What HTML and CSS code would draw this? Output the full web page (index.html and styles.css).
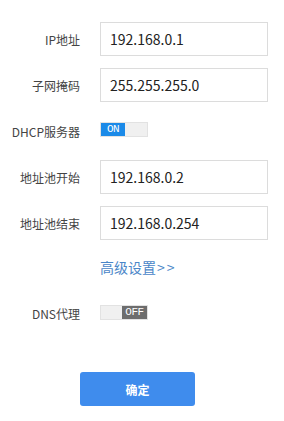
FILE: index.html
```html
<!DOCTYPE html>
<html lang="zh">
<head>
<meta charset="utf-8">
<link rel="stylesheet" href="styles.css">
</head>
<body>
<form class="form">
  <div class="row">
    <label class="label">IP地址</label>
    <div class="field"><input class="input" value="192.168.0.1"></div>
  </div>
  <div class="row">
    <label class="label">子网掩码</label>
    <div class="field"><input class="input" value="255.255.255.0"></div>
  </div>
  <div class="row">
    <label class="label">DHCP服务器</label>
    <div class="field"><span class="toggle toggle-on"><span class="knob-text">ON</span><span class="rest"></span></span></div>
  </div>
  <div class="row">
    <label class="label">地址池开始</label>
    <div class="field"><input class="input" value="192.168.0.2"></div>
  </div>
  <div class="row">
    <label class="label">地址池结束</label>
    <div class="field"><input class="input" value="192.168.0.254"></div>
  </div>
  <div class="row row-link">
    <span class="label"></span>
    <div class="field"><a class="link">高级设置<span class="arrows">&gt;&gt;</span></a></div>
  </div>
  <div class="row row-dns">
    <label class="label">DNS代理</label>
    <div class="field"><span class="toggle toggle-off"><span class="rest"></span><span class="knob-text">OFF</span></span></div>
  </div>
  <div class="actions">
    <button type="button" class="btn">确定</button>
  </div>
</form>
</body>
</html>
```
FILE: styles.css
```css
* { box-sizing: border-box; }
html, body { margin: 0; padding: 0; background: #fff; }
body {
  font-family: "Noto Sans CJK SC", "Noto Sans", sans-serif;
  color: #333;
}
.form {
  display: flex;
  flex-direction: column;
  padding-top: 22px;
  width: 284px;
}
.row {
  display: flex;
  align-items: center;
  height: 34px;
  margin-bottom: 12px;
}
.label {
  width: 80px;
  text-align: right;
  font-size: 12px;
  color: #444;
  margin-right: 20px;
  flex: none;
}
.field { flex: none; width: 168px; display: flex; align-items: center; }
.input {
  width: 168px;
  height: 34px;
  border: 1px solid #dcdcdc;
  padding: 0 9px;
  font-family: "Noto Sans CJK SC", "Noto Sans", sans-serif;
  font-size: 14px;
  color: #222;
  outline: none;
  background: #fff;
}
.toggle {
  display: flex;
  width: 48px;
  height: 15px;
  margin-top: -4px;
  border: 1px solid #e2e2e2;
}
.toggle .rest {
  flex: 1;
  background: #f0f0f0;
}
.knob-text {
  width: 24px;
  display: flex;
  align-items: center;
  justify-content: center;
  font-family: "Liberation Mono", "DejaVu Sans Mono", monospace;
  font-size: 11px;
  color: #fff;
  line-height: 1;
  letter-spacing: -0.5px;
}
.toggle-on .knob-text { background: #1b8ae8; }
.toggle-off .knob-text { background: #6d6d6d; width: 25px; }
.row-link { height: 30px; }
.link {
  font-size: 14px;
  color: #4a86c8;
}
.arrows { letter-spacing: 2px; margin-left: 1px; }
.row-dns { margin-top: 2px; }
.row-dns .toggle { margin-top: -2px; }
.actions {
  padding-left: 80px;
  margin-top: 30px;
}
.btn {
  width: 115px;
  height: 34px;
  border: none;
  border-radius: 3px;
  background: #3f8ced;
  color: #fff;
  font-family: "Noto Sans CJK SC", "Noto Sans", sans-serif;
  font-size: 12px;
  font-weight: bold;
}
```
